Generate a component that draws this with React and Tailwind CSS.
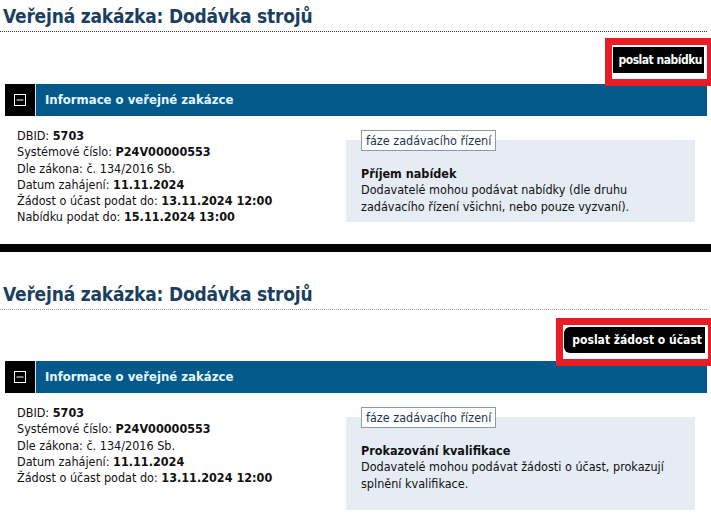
import React from 'react';

const font = { fontFamily: '"DejaVu Sans Condensed", "DejaVu Sans", Verdana, sans-serif' };

function MinusBox() {
  return (
    <svg width="12" height="12" viewBox="0 0 12 12" className="block">
      <rect x="0.5" y="0.5" width="11" height="11" fill="none" stroke="#fff" strokeWidth="1" />
      <line x1="2.5" y1="6" x2="9.5" y2="6" stroke="#fff" strokeWidth="1" />
    </svg>
  );
}

function Panel({ titleTop, lineColor, btnGap, btnBottom, button, btnClass, rows, phase, phaseText, contentTop, boxPb }) {
  return (
    <section className="bg-white">
      <h1
        className={`${titleTop} pl-[3px] pb-[3px] text-[19px] leading-[24px] font-bold tracking-[-0.2px] text-[#1c3f5f] border-b border-dotted ${lineColor} mr-[4px]`}
      >
        Veřejná zakázka: Dodávka strojů
      </h1>

      <div className={`flex justify-end ${btnGap} ${btnBottom}`}>
        <div className="relative">
          <span
            className={`block h-[26px] bg-black text-white text-[12px] leading-[26px] font-bold ${btnClass}`}
          >
            {button}
          </span>
          <div className="absolute -left-[8px] -right-[10px] -top-[9px] -bottom-[13px] border-[7px] border-[#e81d25]" />
        </div>
      </div>

      <div className="mx-[5px] mr-[4px] flex h-[32px] items-stretch">
        <div className="flex w-[31px] items-center justify-center bg-black border-r border-[#cfe6f2]">
          <MinusBox />
        </div>
        <div className="flex flex-1 items-center bg-[#035a8a] pl-[9px] text-[13px] font-bold text-[#e4f6ff]">
          Informace o veřejné zakázce
        </div>
      </div>

      <div className={`flex ${contentTop} text-[12.5px] leading-[16.3px] text-[#111]`}>
        <div className="w-[346px] pl-[17px]">
          {rows.map((r) => (
            <div key={r[0]} className="whitespace-nowrap">
              {r[0]} {r[2] ? <b>{r[1]}</b> : r[1]}
            </div>
          ))}
        </div>
        <div className={`relative mt-[12px] w-[349px] self-start bg-[#e5ecf4] px-[15px] pt-[26px] ${boxPb}`}>
          <span className="absolute left-[15px] -top-[10px] border border-[#8a9aa6] bg-white px-[4px] text-[12.5px] leading-[19px] text-[#1c3550]">
            fáze zadávacího řízení
          </span>
          <div className="font-bold">{phase}</div>
          <div>{phaseText}</div>
        </div>
      </div>
    </section>
  );
}

export default function App() {
  const rowsA = [
    ['DBID:', '5703', true],
    ['Systémové číslo:', 'P24V00000553', true],
    ['Dle zákona:', 'č. 134/2016 Sb.', false],
    ['Datum zahájení:', '11.11.2024', true],
    ['Žádost o účast podat do:', '13.11.2024 12:00', true],
    ['Nabídku podat do:', '15.11.2024 13:00', true],
  ];
  const rowsB = rowsA.slice(0, 5);

  return (
    <div className="h-[523px] w-[711px] overflow-hidden bg-white" style={font}>
      <div className="h-[244px] overflow-hidden">
        <Panel
          titleTop="pt-[4px]"
          lineColor="border-[#333]"
          btnGap="mt-[15px] pr-[7px]"
          btnBottom="mb-[11px]"
          button="poslat nabídku"
          btnClass="pl-[6px] pr-[2px] tracking-[-0.5px]"
          rows={rowsA}
          phase="Příjem nabídek"
          phaseText="Dodavatelé mohou podávat nabídky (dle druhu zadávacího řízení všichni, nebo pouze vyzvaní)."
          contentTop="pt-[12px]"
          boxPb="pb-[7px]"
        />
      </div>
      <div className="h-[8px] bg-black" />
      <Panel
        titleTop="pt-[30px]"
        lineColor="border-[#999]"
        btnGap="mt-[17px] pr-[6px]"
        btnBottom="mb-[8px]"
        button="poslat žádost o účast"
        btnClass="pl-[8px] pr-[3px] rounded-l-[6px]"
        rows={rowsB}
        phase="Prokazování kvalifikace"
        phaseText="Dodavatelé mohou podávat žádosti o účast, prokazují splnění kvalifikace."
        contentTop="pt-[12px]"
        boxPb="pb-[18px]"
      />
    </div>
  );
}
